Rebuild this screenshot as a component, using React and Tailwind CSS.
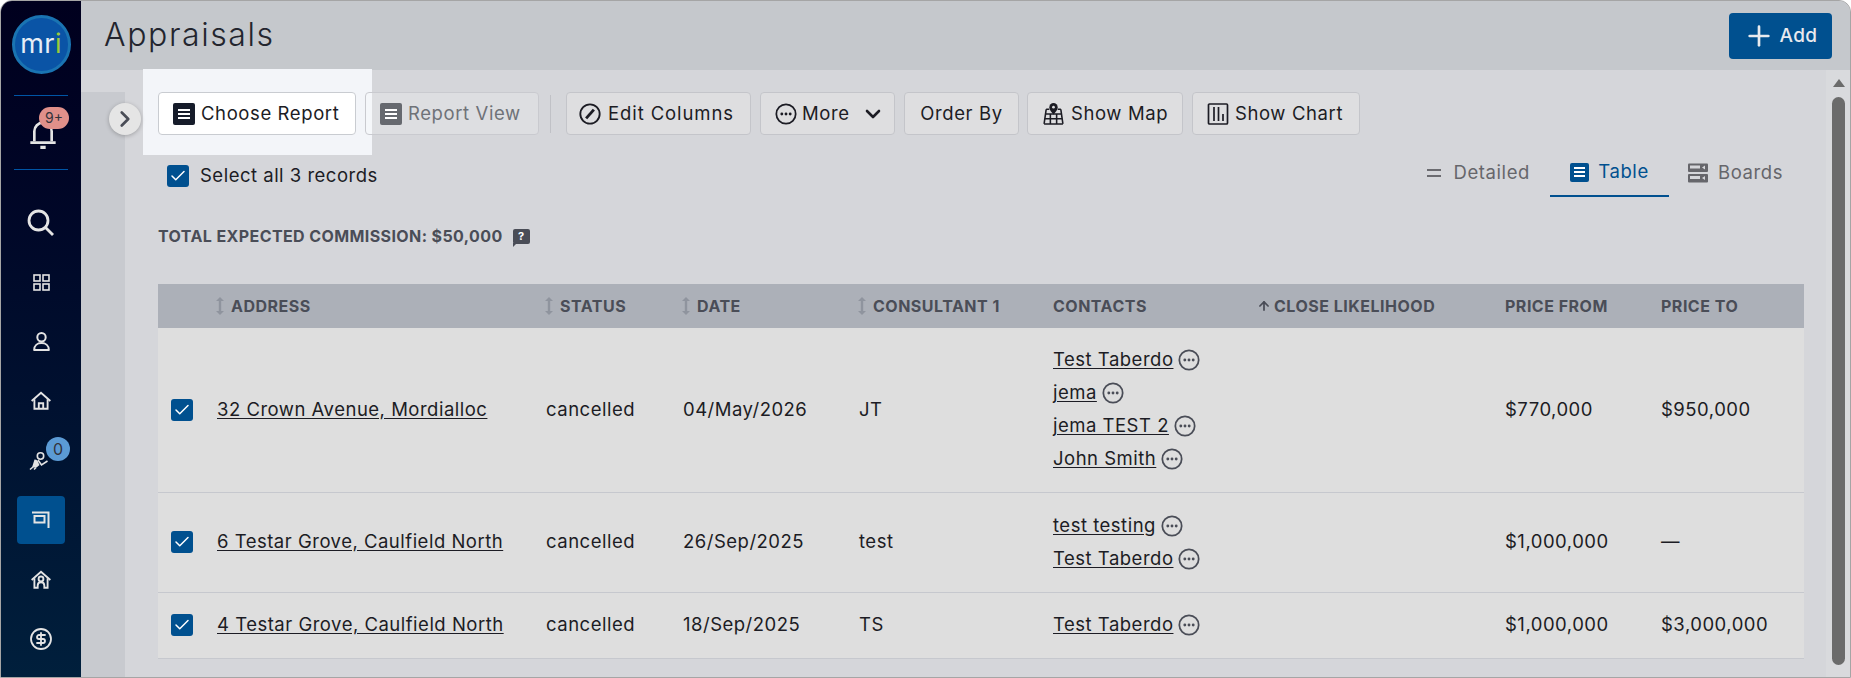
import { ChevronRight, ChevronDown, Plus, Check, ArrowUp, CircleDollarSign } from "lucide-react";

const Stroke = ({ size = 20, box = 20, width = 1.7, children, className = "" }) => (
    <svg width={size} height={size} viewBox={`0 0 ${box} ${box}`} fill="none" stroke="currentColor" strokeWidth={width} className={className}>
        {children}
    </svg>
);

// Iconos del sidebar
const BellIcon = () => (
    <Stroke size={32} box={24} width={2} className="ml-[4px] mt-[3px]">
        <path d="M5.500 17.500V10a6.500 6.500 0 0 1 13 0v7.500" />
        <path d="M2.500 18.500h19" />
        <path d="M10 22h4" strokeWidth="2.400" />
    </Stroke>
);
const SearchIcon = () => (
    <Stroke size={28} box={28} width={2.800}>
        <circle cx="11.500" cy="11.500" r="9.500" />
        <path d="M18.500 18.500 26 26" />
    </Stroke>
);
const GridIcon = () => (
    <Stroke size={17} box={17} width={1.6}>
        <rect x="1" y="1" width="6" height="6" />
        <rect x="10" y="1" width="6" height="6" />
        <rect x="1" y="10" width="6" height="6" />
        <rect x="10" y="10" width="6" height="6" />
    </Stroke>
);
const UserIcon = () => (
    <Stroke size={21} box={20} width={1.9}>
        <circle cx="10" cy="6" r="4" />
        <path d="M3 18c0-4 3-6.500 7-6.500s7 2.500 7 6.500z" strokeLinejoin="round" />
    </Stroke>
);
const HomeIcon = () => (
    <Stroke size={22} box={20} width={1.7}>
        <path d="M1.500 10 10 2.500 18.500 10" />
        <path d="M4 8.500V17h12V8.500" />
        <path d="M8 17v-5h4v5" />
    </Stroke>
);
const AppraiserIcon = () => (
    <Stroke size={24} box={24} width={1.6}>
        <circle cx="11.500" cy="7" r="3.200" />
        <path d="M9 11l3.500 5 6-4" />
        <path d="M5.500 10.500a4 4 0 0 1 4 3.500l1 2-3 2.500H3z" fill="currentColor" stroke="none" />
        <path d="M1 20.500l3-2.500M5 20.500l2-2" />
    </Stroke>
);
const SignIcon = () => (
    <Stroke size={20} box={20} width={2}>
        <path d="M1 2.500h16.500V18" />
        <rect x="3.500" y="6" width="10" height="6.500" />
    </Stroke>
);
const HomeUserIcon = () => (
    <Stroke size={22} box={20} width={1.7}>
        <path d="M1.500 10 10 2.500 18.500 10" />
        <path d="M4 8.500V17h3v-2c0-2 1.200-3 3-3s3 1 3 3v2h3V8.500" />
        <circle cx="10" cy="9" r="2.200" />
    </Stroke>
);

// Iconos de la barra de herramientas
const ReportIcon = ({ color, small }) => (
    <span className={`${small ? "w-[19px] h-[19px]" : "w-[22px] h-[22px]"} rounded-[2px] flex flex-col items-center justify-center gap-[2px] ${color}`}>
        <span className={`${small ? "w-[11px]" : "w-[12px]"} h-[2px] bg-white`} />
        <span className={`${small ? "w-[11px]" : "w-[12px]"} h-[2px] bg-white`} />
        <span className={`${small ? "w-[11px]" : "w-[12px]"} h-[2px] bg-white`} />
    </span>
);
const EditIcon = () => (
    <Stroke size={22} box={20} width={1.7}>
        <circle cx="10" cy="10" r="8.800" />
        <path d="M6.500 14 13.500 6" strokeWidth="2.600" />
    </Stroke>
);
const DotsIcon = ({ size = 22, className = "" }) => (
    <svg width={size} height={size} viewBox="0 0 20 20" fill="none" stroke="currentColor" strokeWidth="1.600" className={className}>
        <circle cx="10" cy="10" r="8.800" />
        <circle cx="6.200" cy="10" r="1.300" fill="currentColor" stroke="none" />
        <circle cx="10" cy="10" r="1.300" fill="currentColor" stroke="none" />
        <circle cx="13.800" cy="10" r="1.300" fill="currentColor" stroke="none" />
    </svg>
);
const MapIcon = () => (
    <Stroke size={23} box={22} width={1.5}>
        <path d="M4 7h3M15 7h3M2 21 4 7M20 21 18 7M2 21h18M3 16h16M3.500 11.500H18.500M8 11v10M14 11v10" />
        <path d="M11 1a4 4 0 0 0-4 4c0 3 4 7 4 7s4-4 4-7a4 4 0 0 0-4-4z" fill="currentColor" stroke="none" />
        <circle cx="11" cy="5" r="1.300" fill="#dedee0" stroke="none" />
    </Stroke>
);
const ChartIcon = () => (
    <Stroke size={22} box={22} width={1.7}>
        <rect x="1.500" y="1" width="19" height="20" rx="1" />
        <path d="M7 4v14M11.500 4v14M16 11v7" />
    </Stroke>
);
const DetailedIcon = () => (
    <span className="w-[14px] flex flex-col gap-[4px]">
        <span className="h-[2px] bg-[#6b6b70]" />
        <span className="h-[2px] bg-[#6b6b70]" />
    </span>
);
const BoardsIcon = () => (
    <svg width="20" height="20" viewBox="0 0 20 20">
        <rect x="0" y="0.500" width="20" height="8.500" rx="1" fill="#66666b" />
        <rect x="0" y="11" width="20" height="8.500" rx="1" fill="#66666b" />
        <rect x="2" y="2.500" width="10" height="3" fill="#d5d6da" />
        <rect x="2" y="13" width="10" height="3" fill="#d5d6da" />
        <path d="M14 4.500l3-2v4zM14 15l3-2v4z" fill="#d5d6da" />
    </svg>
);
const HelpIcon = () => (
    <span className="relative w-[17px] h-[15px] rounded-[2px] bg-[#4a4d57] text-white text-[11px] leading-[15px] font-bold text-center tracking-normal">
        ?
        <span className="absolute left-0 -bottom-[3px] w-0 h-0 border-t-[4px] border-r-[4px] border-t-[#4a4d57] border-r-transparent" />
    </span>
);
const SortIcon = () => (
    <svg width="10" height="18" viewBox="0 0 10 18" fill="#8f949e" className="shrink-0">
        <path d="M5 0 9 4H6.200v10H9l-4 4-4-4h2.800V4H1z" />
    </svg>
);

const CheckBox = () => (
    <span className="w-[22px] h-[22px] rounded-[3px] bg-[#00508f] text-white flex items-center justify-center">
        <Check size={18} strokeWidth={2} />
    </span>
);

const ToolButton = ({ children, className = "" }) => (
    <button className={`h-[43px] shrink-0 flex items-center rounded-[4px] border border-[#c4c5ca] bg-[#dedee0] text-[#1c1c24] text-[18.5px] tracking-[0.6px] ${className}`}>
        {children}
    </button>
);

const SideItem = ({ children, badge }) => (
    <div className="relative h-[59.5px] flex items-center justify-center text-[#e4e4e4]">
        {children}
        {badge}
    </div>
);

const columns = [
    { w: 47 },
    { w: 329, label: "ADDRESS", sort: true },
    { w: 137, label: "STATUS", sort: true },
    { w: 176, label: "DATE", sort: true },
    { w: 194, label: "CONSULTANT 1", sort: true },
    { w: 205, label: "CONTACTS" },
    { w: 247, label: "CLOSE LIKELIHOOD", arrow: true },
    { w: 156, label: "PRICE FROM" },
    { w: 155, label: "PRICE TO" },
];

const rows = [
    {
        h: "h-[164px]",
        address: "32 Crown Avenue, Mordialloc",
        date: "04/May/2026",
        consultant: "JT",
        contacts: ["Test Taberdo", "jema", "jema TEST 2", "John Smith"],
        from: "$770,000",
        to: "$950,000",
    },
    {
        h: "h-[100px]",
        address: "6 Testar Grove, Caulfield North",
        date: "26/Sep/2025",
        consultant: "test",
        contacts: ["test testing", "Test Taberdo"],
        from: "$1,000,000",
        to: "—",
    },
    {
        h: "h-[66px]",
        address: "4 Testar Grove, Caulfield North",
        date: "18/Sep/2025",
        consultant: "TS",
        contacts: ["Test Taberdo"],
        from: "$1,000,000",
        to: "$3,000,000",
    },
];

const App = () => {
    return (
        <div className="relative h-screen w-full overflow-hidden flex rounded-t-[12px] border border-[#a5a5a5] bg-[#d5d6da] font-['Inter',sans-serif] text-[#1c1c24]">
            {/* Resaltado del tour */}
            <div className="absolute left-[142px] top-[68px] w-[229px] h-[86px] bg-[#f3f5f9]" />

            {/* Sidebar */}
            <aside className="w-[80px] shrink-0 bg-gradient-to-b from-[#00001e] to-[#001f3c] flex flex-col items-center">
                <div className="mt-[14px] w-[59px] h-[59px] rounded-full bg-[#0a54a6] border-[3px] border-[#1a74b2] flex items-center justify-center text-[#e6eef6] text-[27px] leading-none">
                    <span className="-mt-[3px] tracking-[0.2px]">mr<span className="text-[#9ccb3b]">i</span></span>
                </div>
                <div className="mt-[21px] w-[54px] h-px bg-[#0055a5]" />
                <div className="relative h-[73px] w-full flex items-center justify-center text-[#e4e4e4]">
                    <BellIcon />
                    <span className="absolute left-[38px] top-[11px] w-[30px] h-[22px] rounded-full bg-[#e0908a] text-[#33343c] text-[14px] leading-[22px] text-center">9+</span>
                </div>
                <div className="w-[54px] h-px bg-[#0055a5]" />
                <div className="mt-[23px] w-full flex flex-col">
                    <SideItem><SearchIcon /></SideItem>
                    <SideItem><GridIcon /></SideItem>
                    <SideItem><UserIcon /></SideItem>
                    <SideItem><HomeIcon /></SideItem>
                    <SideItem badge={<span className="absolute left-[45px] top-[6px] w-[24px] h-[24px] rounded-full bg-[#5b9bd5] text-[#33343c] text-[16px] leading-[24px] text-center">0</span>}>
                        <AppraiserIcon />
                    </SideItem>
                    <SideItem>
                        <span className="w-[48px] h-[48px] rounded-[4px] bg-[#00508f] flex items-center justify-center"><SignIcon /></span>
                    </SideItem>
                    <SideItem><HomeUserIcon /></SideItem>
                    <SideItem><CircleDollarSign size={24} strokeWidth={1.8} /></SideItem>
                </div>
            </aside>

            {/* Contenido Principal */}
            <div className="flex-1 min-w-0 flex flex-col">
                <header className="h-[69px] shrink-0 bg-[#c5c8cc] flex items-start justify-between pl-[23px] pr-[18px]">
                    <h1 className="mt-[13px] text-[32px] leading-[42px] font-light tracking-[1.6px] text-[#23252e]">Appraisals</h1>
                    <button className="mt-[12px] w-[103px] h-[46px] rounded-[4px] bg-[#00508f] text-[#e8eaee] text-[19px] font-medium tracking-[0.4px] flex items-center justify-center gap-[4px] -ml-[2px]">
                        <Plus size={32} strokeWidth={2} />
                        Add
                    </button>
                </header>

                <div className="flex-1 min-h-0 flex">
                    {/* Franja izquierda */}
                    <div className="w-[44px] shrink-0 mt-[22px] bg-[#c8cacf]" />

                    <main className="flex-1 min-w-0 pl-[33px] pr-[22px] pt-[22px]">
                        <div className="flex items-center">
                            <ToolButton className="relative w-[198px] pl-[14px] gap-[6px] !bg-white !border-[#c9ccd1]">
                                <ReportIcon color="bg-[#161c2a]" />
                                Choose Report
                            </ToolButton>
                            <ToolButton className="relative ml-[9px] w-[174px] pl-[14px] gap-[6px] !bg-white/20 !border-[#c9cacf] !text-[#6f7278]">
                                <ReportIcon color="bg-[#66696f]" />
                                Report View
                            </ToolButton>
                            <div className="mx-[11px] w-px h-[38px] bg-[#c0c1c6]" />
                            <ToolButton className="ml-[4px] w-[185px] pl-[12px] gap-[7px] tracking-[0.9px]"><EditIcon />Edit Columns</ToolButton>
                            <ToolButton className="ml-[9px] w-[135px] pl-[14px] gap-[5px]">
                                <DotsIcon />
                                More
                                <ChevronDown size={24} strokeWidth={2.600} className="ml-[6px]" />
                            </ToolButton>
                            <ToolButton className="ml-[9px] w-[115px] justify-center">Order By</ToolButton>
                            <ToolButton className="ml-[8px] w-[156px] pl-[14px] gap-[6px]"><MapIcon />Show Map</ToolButton>
                            <ToolButton className="ml-[9px] w-[168px] pl-[14px] gap-[6px]"><ChartIcon />Show Chart</ToolButton>
                        </div>

                        <div className="flex items-start justify-between h-[62px]">
                            <label className="mt-[27px] ml-[9px] flex items-center gap-[11px] text-[18.5px] tracking-[0.5px]">
                                <CheckBox />
                                Select all 3 records
                            </label>
                            <div className="mt-[14px] flex text-[18.5px] tracking-[0.6px] text-[#66666b]">
                                <div className="h-[48px] flex items-center gap-[12px] pr-[20px]">
                                    <DetailedIcon />
                                    Detailed
                                </div>
                                <div className="h-[48px] w-[119px] flex items-center justify-center gap-[9px] border-b-2 border-[#00508f] text-[#00508f]">
                                    <ReportIcon small color="bg-[#00508f]" />
                                    Table
                                </div>
                                <div className="h-[48px] w-[135px] flex items-center gap-[10px] pl-[19px]">
                                    <BoardsIcon />
                                    Boards
                                </div>
                            </div>
                        </div>

                        <div className="mt-[30px] flex items-center gap-[10px] h-[18px] text-[16px] font-bold tracking-[0.4px] text-[#4a4d57]">
                            TOTAL EXPECTED COMMISSION: $50,000
                            <HelpIcon />
                        </div>

                        <table className="mt-[39px] w-[1646px] table-fixed">
                            <colgroup>
                                {columns.map((col, i) => <col key={i} style={{ width: col.w }} />)}
                            </colgroup>
                            <thead>
                                <tr className="h-[44px] bg-[#acb0b8] text-[#4a4d57] text-[16px] text-left">
                                    {columns.map((col, i) => (
                                        <th key={i} className="pl-[12px] font-bold tracking-[0.5px]">
                                            {col.label && (
                                                <span className={`flex items-center gap-[6px] ${col.sort ? "-ml-[2px]" : ""}`}>
                                                    {col.sort && <SortIcon />}
                                                    {col.arrow && <ArrowUp size={14} strokeWidth={3} className="-ml-[1px] -mr-[3px]" />}
                                                    {col.label}
                                                </span>
                                            )}
                                        </th>
                                    ))}
                                </tr>
                            </thead>
                            <tbody>
                                {rows.map((row) => (
                                    <tr key={row.address} className={`${row.h} bg-[#dedede] border-b border-[#c6c8ce] text-[18.5px] tracking-[0.5px]`}>
                                        <td className="pl-[13px]"><CheckBox /></td>
                                        <td className="pl-[12px]"><a className="underline underline-offset-2">{row.address}</a></td>
                                        <td className="pl-[12px]">cancelled</td>
                                        <td className="pl-[12px]">{row.date}</td>
                                        <td className="pl-[12px]">{row.consultant}</td>
                                        <td className="pl-[12px]">
                                            {row.contacts.map((name) => (
                                                <div key={name} className="h-[33px] flex items-center gap-[5px]">
                                                    <a className="underline underline-offset-2">{name}</a>
                                                    <DotsIcon size={22} className="text-[#4a4d57]" />
                                                </div>
                                            ))}
                                        </td>
                                        <td />
                                        <td className="pl-[12px]">{row.from}</td>
                                        <td className="pl-[12px]">{row.to}</td>
                                    </tr>
                                ))}
                            </tbody>
                        </table>
                    </main>

                    {/* Scrollbar */}
                    <div className="w-[24px] shrink-0 bg-[#d9dadd] flex flex-col items-center pl-[1px] pt-[9px]">
                        <span className="w-0 h-0 border-x-[6px] border-b-[8px] border-x-transparent border-b-[#6b6b6b]" />
                        <span className="mt-[10px] w-[13px] h-[568px] rounded-full bg-[#6b6b6b]" />
                    </div>
                </div>
            </div>

            {/* Botón colapsar */}
            <button className="absolute left-[108px] top-[102px] w-[32px] h-[32px] rounded-full bg-[#e5e5e5] shadow-[0_1px_4px_rgba(0,0,0,0.25)] flex items-center justify-center text-[#4a4d57]">
                <ChevronRight size={26} strokeWidth={2.500} />
            </button>
        </div>
    );
};

export default App;
